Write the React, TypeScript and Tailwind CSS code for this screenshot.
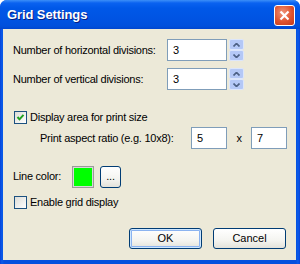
import React from "react";

const font = "font-['Liberation_Sans',Arial,sans-serif]";

function SpinButton({ up }: { up: boolean }) {
  return (
    <div className="w-[15px] h-[11px] shrink-0 flex items-center justify-center border border-[#DCE6FB] rounded-[2px] bg-[#B4C8F6]">
      <svg width="7" height="4" viewBox="0 0 7 4">
        {up ? (
          <path d="M0.5 3.5 L3.5 0.5 L6.5 3.5" fill="none" stroke="#4D6185" strokeWidth="1.7" />
        ) : (
          <path d="M0.5 0.5 L3.5 3.5 L6.5 0.5" fill="none" stroke="#4D6185" strokeWidth="1.7" />
        )}
      </svg>
    </div>
  );
}

function SpinInput({ value }: { value: string }) {
  return (
    <div className="flex items-center shrink-0">
      <div className="w-[60px] h-[22px] shrink-0 border border-[#7F9DB9] bg-white flex items-center pl-[5px] text-[11px] text-black">
        {value}
      </div>
      <div className="ml-[2px] w-[15px] shrink-0 flex flex-col">
        <SpinButton up />
        <SpinButton up={false} />
      </div>
    </div>
  );
}

function TextInput({ value }: { value: string }) {
  return (
    <div className="w-[36px] h-[22px] shrink-0 border border-[#7F9DB9] bg-white flex items-center pl-[5px] text-[11px] text-black">
      {value}
    </div>
  );
}

function Checkbox({ checked }: { checked: boolean }) {
  return (
    <div className="w-[13px] h-[13px] shrink-0 border border-[#1C5180] bg-[linear-gradient(135deg,#DCDCD7,#FFFFFF)] flex items-center justify-center">
      {checked && (
        <svg width="9" height="9" viewBox="0 0 9 9">
          <path d="M1.5 4 L3.5 6.3 L7.5 1.8" fill="none" stroke="#21A121" strokeWidth="2" />
        </svg>
      )}
    </div>
  );
}

function XPButton({ label, def }: { label: string; def?: boolean }) {
  return (
    <div
      className={`w-[73px] h-[21px] rounded-[3px] border border-[#003C74] bg-[linear-gradient(180deg,#FFFFFF,#F4F4F0_60%,#E3E2DA)] flex items-center justify-center text-[11px] text-black ${
        def ? "shadow-[inset_0_0_0_1px_#CEE7FF,inset_0_0_0_2px_#8BB3F0]" : ""
      }`}
    >
      {label}
    </div>
  );
}

export default function App() {
  return (
    <div className={`${font} w-[300px] h-[264px] bg-white`}>
      <div className="w-[300px] h-[264px] rounded-t-[7px] bg-[linear-gradient(90deg,#0842D8,#0A5BEA_2px,#0550DE_4px,#0550DE_296px,#0A5BEA_298px,#0842D8)] flex flex-col overflow-hidden">
        {/* Title bar */}
        <div className="h-[29px] shrink-0 flex items-center justify-between pl-[7px] pr-[5px] bg-[linear-gradient(180deg,#3C8FF8_0px,#0A62F0_3px,#0058E8_8px,#0054E3_18px,#0050DC_26px,#0046CF_29px)]">
          <span className="text-white font-bold text-[13px] tracking-[-0.1px] [text-shadow:1px_1px_0_#0A1E80] mt-[1px]">
            Grid Settings
          </span>
          <div className="w-[21px] h-[21px] rounded-[3px] border border-white bg-[radial-gradient(circle_at_40%_35%,#F0957A,#E0532E_55%,#C2391A)] flex items-center justify-center mt-[1px]">
            <svg width="11" height="11" viewBox="0 0 11 11">
              <path d="M1.5 1.5 L9.5 9.5 M9.5 1.5 L1.5 9.5" stroke="white" strokeWidth="2.2" />
            </svg>
          </div>
        </div>
        {/* Client */}
        <div className="ml-[3px] mr-[4px] h-[231px] bg-[#ECE9D8] flex flex-col pl-[10px] text-[11px] text-black tracking-[-0.25px]">
          <div className="mt-[10px] h-[22px] flex items-center">
            <span className="w-[154px] shrink-0">Number of horizontal divisions:</span>
            <SpinInput value="3" />
          </div>
          <div className="mt-[7px] h-[22px] flex items-center">
            <span className="w-[154px] shrink-0">Number of vertical divisions:</span>
            <SpinInput value="3" />
          </div>
          <div className="mt-[21px] h-[13px] flex items-center ml-[1px]">
            <Checkbox checked />
            <span className="ml-[3px]">Display area for print size</span>
          </div>
          <div className="mt-[3px] h-[22px] flex items-center">
            <span className="ml-[27px] w-[151px] shrink-0">Print aspect ratio (e.g. 10x8):</span>
            <TextInput value="5" />
            <span className="w-[24px] text-center">x</span>
            <TextInput value="7" />
          </div>
          <div className="mt-[16px] h-[23px] flex items-center">
            <span className="w-[59px] shrink-0">Line color:</span>
            <div className="w-[22px] h-[22px] border border-[#9A9A9A] p-[1px] bg-[#D8D8D8]">
              <div className="w-full h-full bg-[#00FF00]" />
            </div>
            <div className="ml-[6px] w-[21px] h-[22px] rounded-[3px] border border-[#003C74] bg-[linear-gradient(180deg,#FFFFFF,#F4F4F0_60%,#E3E2DA)] flex items-end justify-center pb-[5px] text-[11px] leading-none">
              ...
            </div>
          </div>
          <div className="mt-[8px] h-[13px] flex items-center ml-[1px]">
            <Checkbox checked={false} />
            <span className="ml-[3px]">Enable grid display</span>
          </div>
          <div className="mt-[19px] flex tracking-normal">
            <div className="ml-[116px]">
              <XPButton label="OK" def />
            </div>
            <div className="ml-[11px]">
              <XPButton label="Cancel" />
            </div>
          </div>
        </div>
      </div>
    </div>
  );
}
